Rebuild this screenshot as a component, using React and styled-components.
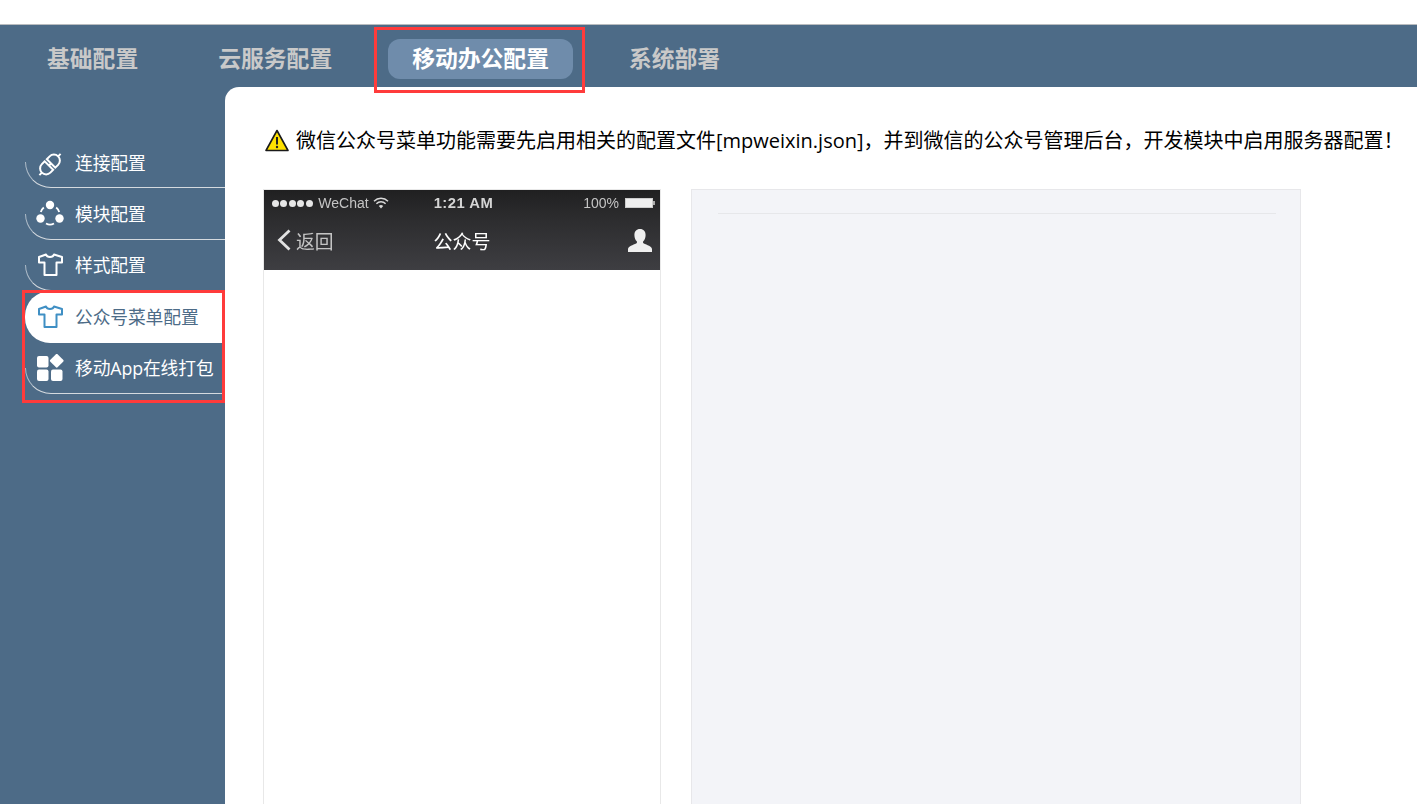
import React from "react";
import styled, { createGlobalStyle } from "styled-components";

const GlobalStyle = createGlobalStyle`
  html, body { margin: 0; padding: 0; background: #fff; overflow: hidden; }
  body { font-family: "Liberation Sans", "Noto Sans CJK SC", sans-serif; }
`;

const Page = styled.div`
  position: relative;
  width: 1417px;
  height: 804px;
  overflow: hidden;
  display: flex;
  flex-direction: column;
`;

const TopStrip = styled.div`
  height: 24px;
  flex: none;
  background: #fff;
  border-bottom: 1px solid #b9bcbf;
`;

const Shell = styled.div`
  flex: 1;
  min-height: 0;
  background: #4d6b87;
  display: flex;
  flex-direction: column;
`;

const TabBar = styled.nav`
  height: 62px;
  flex: none;
  display: flex;
  align-items: center;
  gap: 32px;
  padding: 5px 0 0 23px;
  box-sizing: border-box;
`;

const Tab = styled.div`
  height: 40px;
  line-height: 40px;
  padding: 0 24px;
  border-radius: 12px;
  font-size: 22.8px;
  font-weight: 700;
  white-space: nowrap;
  color: ${(p) => (p.$active ? "#fff" : "#c9c9c9")};
  background: ${(p) => (p.$active ? "#6f8cab" : "transparent")};
`;

const Body = styled.div`
  flex: 1;
  min-height: 0;
  display: flex;
`;

const Sidebar = styled.aside`
  width: 225px;
  flex: none;
  box-sizing: border-box;
  padding: 50px 0 0 25px;
`;

const MenuItem = styled.div`
  position: relative;
  height: 51.4px;
  box-sizing: border-box;
  display: flex;
  align-items: center;
  gap: 11px;
  padding: 0 0 0 11px;
  font-family: "Open Sans", "Noto Sans CJK SC", sans-serif;
  font-size: 17.75px;
  white-space: nowrap;
  color: ${(p) => (p.$active ? "#4d6b87" : "#fff")};
  background: ${(p) => (p.$active ? "#fff" : "transparent")};
  border-radius: ${(p) => (p.$active ? "25px 0 0 25px" : "0")};
  &::after {
    content: "";
    display: ${(p) => (p.$active ? "none" : "block")};
    position: absolute;
    left: 0;
    right: 0;
    bottom: 0;
    height: 26px;
    box-sizing: border-box;
    border-left: 1px solid rgba(255, 255, 255, 0.55);
    border-bottom: 1px solid #d5dadf;
    border-bottom-left-radius: 26px;
  }
`;

const MenuLabel = styled.span`
  position: relative;
  top: -1px;
  letter-spacing: -0.1px;
`;

const MenuIcon = styled.svg`
  width: 28px;
  height: 28px;
  flex: none;
  color: ${(p) => (p.$active ? "#3f8fc4" : "#fff")};
`;

const Content = styled.main`
  flex: 1;
  min-width: 0;
  background: #fff;
  border-top-left-radius: 14px;
  box-sizing: border-box;
  padding: 40px 0 0 38px;
  overflow: hidden;
`;

const Notice = styled.div`
  display: flex;
  align-items: center;
  gap: 7px;
  height: 26px;
  margin-left: 2px;
  font-family: "Open Sans", "Noto Sans CJK SC", sans-serif;
  font-size: 20px;
  color: #000;
  white-space: nowrap;
`;

const NoticeText = styled.span`
  position: relative;
  top: -1px;
`;

const Panels = styled.div`
  display: flex;
  align-items: flex-start;
  gap: 30px;
  margin-top: 36px;
`;

const Phone = styled.section`
  width: 398px;
  height: 640px;
  flex: none;
  box-sizing: border-box;
  border: 1px solid #e8e8e8;
`;

const PhoneHead = styled.div`
  height: 80px;
  background: linear-gradient(#202021, #2c2c2e 35%, #3e3e42);
  color: #c4c4c4;
  filter: blur(0.3px);
`;

const StatusBar = styled.div`
  height: 26px;
  display: grid;
  grid-template-columns: 1fr auto 1fr;
  align-items: center;
  padding: 0 5px 0 8px;
  font-size: 14px;
`;

const StatusGroup = styled.div`
  display: flex;
  align-items: center;
  gap: ${(p) => p.$gap || 4}px;
  justify-content: ${(p) => (p.$end ? "flex-end" : "flex-start")};
`;

const SignalDot = styled.i`
  width: 7px;
  height: 7px;
  border-radius: 50%;
  background: #e6e6e6;
  margin-right: 1.4px;
`;

const Clock = styled.div`
  font-size: 14.8px;
  font-weight: 700;
  letter-spacing: 0.5px;
  color: #d4d4d4;
`;

const NavBar = styled.div`
  height: 54px;
  display: grid;
  grid-template-columns: 1fr auto 1fr;
  align-items: center;
  padding: 0 8px 6px;
  box-sizing: border-box;
`;

const BackLink = styled.div`
  display: flex;
  align-items: center;
  gap: 5px;
  padding-left: 5px;
  font-size: 18.8px;
`;

const PhoneTitle = styled.div`
  font-size: 19px;
  color: #fff;
`;

const UserSlot = styled.div`
  display: flex;
  justify-content: flex-end;
`;

const Preview = styled.section`
  width: 610px;
  height: 640px;
  flex: none;
  box-sizing: border-box;
  background: #f3f4f8;
  border: 1px solid #e7e7ea;
  padding: 23px 24px 0 26px;
`;

const Rule = styled.div`
  height: 1px;
  background: #e6e7ea;
`;

const Callout = styled.div`
  position: absolute;
  box-sizing: border-box;
  border: 3px solid #ff3b3b;
  left: ${(p) => p.$x}px;
  top: ${(p) => p.$y}px;
  width: ${(p) => p.$w}px;
  height: ${(p) => p.$h}px;
`;

const PlugIcon = () => (
  <MenuIcon viewBox="0 0 28 28" fill="none" stroke="currentColor" strokeWidth="2">
    <g transform="rotate(45 14 15.500)">
      <path d="M8 14v-4a6 6 0 0 1 12 0v4Z" />
      <path d="M8 17v4a6 6 0 0 0 12 0v-4Z" />
      <path d="M14 14v3M14 4V.5M14 27v3.500" />
    </g>
  </MenuIcon>
);

const ClusterIcon = () => (
  <MenuIcon viewBox="0 0 28 28" fill="currentColor">
    <circle cx="14" cy="5" r="4.200" />
    <circle cx="4.500" cy="18.500" r="4.200" />
    <circle cx="23.500" cy="18.500" r="4.200" />
    <path d="M4.800 12a10 10 0 0 1 3-4.500M23.200 12a10 10 0 0 0-3-4.500M10 23.500a8 8 0 0 0 8 0" fill="none" stroke="currentColor" strokeWidth="1.800" />
  </MenuIcon>
);

const ShirtIcon = ({ active }) => (
  <MenuIcon $active={active} viewBox="0 0 28 28" fill="none" stroke="currentColor" strokeWidth="2" strokeLinejoin="round">
    <path d="M10 3.500 3 6v5.500h5.500V24h12V11.500H26V6l-8-2.500c-.5 1.500-2 2.500-4 2.500s-3.500-1-4-2.500Z" />
  </MenuIcon>
);

const AppsIcon = () => (
  <MenuIcon viewBox="0 0 28 28" fill="currentColor">
    <rect x="1" y="2" width="11.500" height="11.500" rx="2" />
    <rect x="15.500" y="1.500" width="10.500" height="10.500" rx="1.500" transform="rotate(45 20.750 6.750)" />
    <rect x="1" y="15.500" width="11.500" height="11.500" rx="2" />
    <rect x="15" y="15.500" width="11.500" height="11.500" rx="2" />
  </MenuIcon>
);

const WarningIcon = () => (
  <svg width="24" height="23" viewBox="0 0 24 23">
    <path d="M12 1.500 23 21.500H1Z" fill="#ffe100" stroke="#1a1a1a" strokeWidth="1.600" strokeLinejoin="round" />
    <path d="M12 8v7.500" stroke="#222" strokeWidth="2" />
    <circle cx="12" cy="18" r="1.200" fill="#222" />
  </svg>
);

const WifiIcon = () => (
  <svg width="16" height="12" viewBox="0 0 16 12" fill="none" stroke="#d8d8d8" strokeWidth="1.500">
    <path d="M1 4.200a10 10 0 0 1 14 0M3.400 6.700a6.500 6.500 0 0 1 9.200 0" />
    <path d="M5.800 9.100a3 3 0 0 1 4.400 0L8 11.500Z" fill="#d8d8d8" stroke="none" />
  </svg>
);

const BatteryIcon = () => (
  <svg width="30" height="10" viewBox="0 0 30 10">
    <rect x="0.500" y="0.500" width="27" height="9" fill="#eee" stroke="#ccc" />
    <rect x="28" y="3" width="2" height="4" fill="#aaa" />
  </svg>
);

const ChevronIcon = () => (
  <svg width="14" height="22" viewBox="0 0 14 22" fill="none" stroke="#e2e2e2" strokeWidth="2.800">
    <path d="M12.500 1.500 2.500 11l10 9.500" />
  </svg>
);

const PersonIcon = () => (
  <svg width="24" height="23" viewBox="0 0 24 23" fill="#efefef">
    <path d="M12 0c3.600 0 5.600 2.500 5.600 6 0 2.700-1 5-2.300 6.300-.6.700-.3 1.700.5 2.100 3 1.300 8.200 3 8.200 5.600V23H0v-3c0-2.600 5.200-4.300 8.200-5.600.8-.4 1.100-1.400.5-2.100C7.400 11 6.400 8.700 6.400 6 6.400 2.500 8.400 0 12 0Z" />
  </svg>
);

const tabs = ["基础配置", "云服务配置", "移动办公配置", "系统部署"];

export default function App() {
  return (
    <Page>
      <GlobalStyle />
      <TopStrip />
      <Shell>
        <TabBar>
          {tabs.map((t, i) => (
            <Tab key={t} $active={i === 2}>{t}</Tab>
          ))}
        </TabBar>
        <Body>
          <Sidebar>
            <MenuItem><PlugIcon /><MenuLabel>连接配置</MenuLabel></MenuItem>
            <MenuItem><ClusterIcon /><MenuLabel>模块配置</MenuLabel></MenuItem>
            <MenuItem><ShirtIcon /><MenuLabel>样式配置</MenuLabel></MenuItem>
            <MenuItem $active><ShirtIcon active /><MenuLabel>公众号菜单配置</MenuLabel></MenuItem>
            <MenuItem><AppsIcon /><MenuLabel>移动App在线打包</MenuLabel></MenuItem>
          </Sidebar>
          <Content>
            <Notice>
              <WarningIcon />
              <NoticeText>微信公众号菜单功能需要先启用相关的配置文件[mpweixin.json]，并到微信的公众号管理后台，开发模块中启用服务器配置！</NoticeText>
            </Notice>
            <Panels>
              <Phone>
                <PhoneHead>
                  <StatusBar>
                    <StatusGroup>
                      <StatusGroup $gap={0.1}>
                        {[0, 1, 2, 3, 4].map((n) => <SignalDot key={n} />)}
                      </StatusGroup>
                      WeChat
                      <WifiIcon />
                    </StatusGroup>
                    <Clock>1:21 AM</Clock>
                    <StatusGroup $end $gap={6}>
                      100%
                      <BatteryIcon />
                    </StatusGroup>
                  </StatusBar>
                  <NavBar>
                    <BackLink><ChevronIcon />返回</BackLink>
                    <PhoneTitle>公众号</PhoneTitle>
                    <UserSlot><PersonIcon /></UserSlot>
                  </NavBar>
                </PhoneHead>
              </Phone>
              <Preview>
                <Rule />
              </Preview>
            </Panels>
          </Content>
        </Body>
      </Shell>
      <Callout $x={374} $y={27} $w={211} $h={66} />
      <Callout $x={22} $y={290} $w={203} $h={113} />
    </Page>
  );
}
